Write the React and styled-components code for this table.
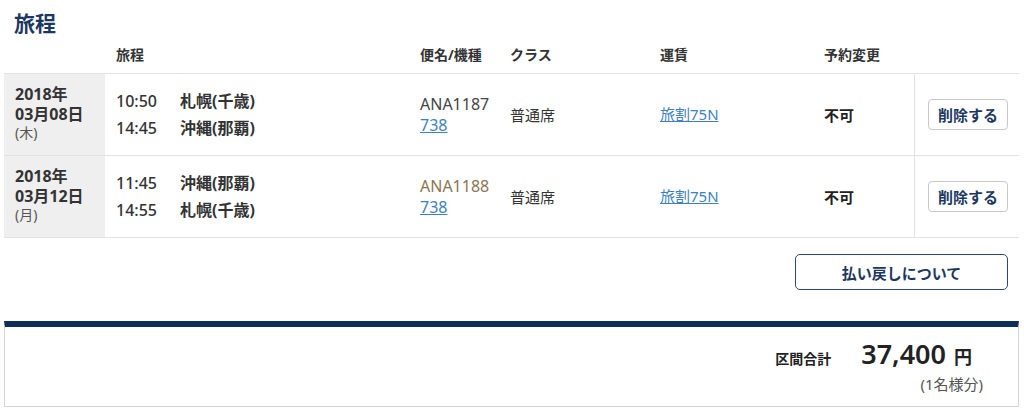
import styled, { createGlobalStyle } from 'styled-components';
import React from 'react';

const Global = createGlobalStyle`
    body {
        margin: 0;
        background: #ffffff;
        font-family: "Noto Sans", "Noto Sans CJK JP", sans-serif;
        color: #333333;
    }
`

const Page = styled.div`
    width: 1024px;
    padding: 0 5px 0 4px;
    box-sizing: border-box;
`

const Title = styled.h2`
    font-size: 21px;
    font-weight: 700;
    color: #1c3761;
    margin: 0;
    padding: 9px 0 0 10px;
    line-height: 28px;
`

const Grid = styled.div`
    display: grid;
    grid-template-columns: 101px 315px 90px 150px 164px 90px 1fr;
`

const Head = styled.div`
    font-size: 14px;
    font-weight: 700;
    color: #333;
    height: 28px;
    line-height: 20px;
    padding-top: 8px;
    padding-left: ${p => p.$pad || 0}px;
    border-bottom: 1px solid #e2e2e2;
`

const Cell = styled.div`
    border-bottom: 1px solid #e2e2e2;
    display: flex;
    flex-direction: column;
    justify-content: center;
    font-size: 15px;
    padding-left: ${p => p.$pad || 0}px;
    box-sizing: border-box;
    height: 82px;
`

const DateCell = styled(Cell)`
    background: #efefef;
    padding-left: 11px;
    padding-bottom: 4px;
    font-weight: 700;
    font-size: 16px;
    line-height: 20px;
    color: #333;
`

const Weekday = styled.span`
    font-weight: 400;
    font-size: 14px;
    color: #555;
    line-height: 18px;
`

const Leg = styled.div`
    display: flex;
    font-size: 16px;
    line-height: 27px;
    color: #333;
`

const Time = styled.span`
    width: 64px;
    font-weight: 500;
`

const City = styled.span`
    font-weight: 700;
`

const Flight = styled.span`
    color: ${p => p.$gold ? '#8a7650' : '#444'};
    font-size: 16px;
    line-height: 21px;
`

const LinkText = styled.a`
    color: #3d7fc1;
    text-decoration: underline;
    font-size: ${p => p.$size || 15}px;
    line-height: 21px;
    cursor: pointer;
`

const Strong = styled.span`
    font-weight: 700;
    color: #222;
`

const ActionCell = styled(Cell)`
    border-left: 1px solid #e2e2e2;
    align-items: center;
`

const SmallButton = styled.button`
    font-family: inherit;
    font-size: 15px;
    font-weight: 700;
    color: #1c3761;
    background: #fff;
    border: 1px solid #c9c9c9;
    border-radius: 4px;
    width: 80px;
    height: 31px;
    padding: 0;
    margin-left: 2px;
`

const Actions = styled.div`
    display: flex;
    justify-content: flex-end;
    padding: 16px 11px 0 0;
`

const RefundButton = styled.button`
    font-family: inherit;
    font-size: 15px;
    font-weight: 700;
    color: #1c3761;
    background: #fff;
    border: 1.5px solid #2d4a6c;
    border-radius: 5px;
    width: 213px;
    height: 36px;
    padding: 0;
`

const Summary = styled.div`
    margin-top: 31px;
    border-top: 6px solid #0f2e57;
    border-left: 1px solid #d4d4d4;
    border-right: 1px solid #d4d4d4;
    border-bottom: 1px solid #d4d4d4;
    display: flex;
    justify-content: flex-end;
    padding: 11px 35px 0 0;
    box-sizing: border-box;
    height: 86px;
`

const TotalBlock = styled.div`
    display: flex;
    flex-direction: column;
    align-items: flex-end;
`

const TotalLine = styled.div`
    display: flex;
    align-items: baseline;
    margin-right: 11px;
    line-height: 32px;
`

const TotalLabel = styled.span`
    font-size: 14px;
    font-weight: 700;
    color: #222;
    margin-right: 30px;
`

const Amount = styled.span`
    font-size: 27px;
    font-weight: 600;
    color: #222;
`

const Yen = styled.span`
    font-size: 18px;
    font-weight: 700;
    color: #222;
    margin-left: 8px;
`

const Per = styled.span`
    font-size: 15px;
    color: #555;
    line-height: 18px;
`

const legs = [
    {
        year: '2018年', day: '03月08日', week: '(木)',
        trip: [['10:50', '札幌(千歳)'], ['14:45', '沖縄(那覇)']],
        flight: 'ANA1187', gold: false
    },
    {
        year: '2018年', day: '03月12日', week: '(月)',
        trip: [['11:45', '沖縄(那覇)'], ['14:55', '札幌(千歳)']],
        flight: 'ANA1188', gold: true
    }
]

const App = () => {
    return <Page>
        <Global />
        <Title>旅程</Title>
        <Grid>
            <Head />
            <Head $pad={11}>旅程</Head>
            <Head>便名/機種</Head>
            <Head>クラス</Head>
            <Head>運賃</Head>
            <Head>予約変更</Head>
            <Head />
            {legs.map(l => (
                <React.Fragment key={l.flight}>
                    <DateCell>
                        <span>{l.year}</span>
                        <span>{l.day}</span>
                        <Weekday>{l.week}</Weekday>
                    </DateCell>
                    <Cell $pad={11}>
                        {l.trip.map(t => (
                            <Leg key={t[0]}><Time>{t[0]}</Time><City>{t[1]}</City></Leg>
                        ))}
                    </Cell>
                    <Cell>
                        <Flight $gold={l.gold}>{l.flight}</Flight>
                        <LinkText $size={16}>738</LinkText>
                    </Cell>
                    <Cell>普通席</Cell>
                    <Cell><LinkText>旅割75N</LinkText></Cell>
                    <Cell><Strong>不可</Strong></Cell>
                    <ActionCell><SmallButton>削除する</SmallButton></ActionCell>
                </React.Fragment>
            ))}
        </Grid>
        <Actions>
            <RefundButton>払い戻しについて</RefundButton>
        </Actions>
        <Summary>
            <TotalBlock>
                <TotalLine>
                    <TotalLabel>区間合計</TotalLabel>
                    <Amount>37,400</Amount>
                    <Yen>円</Yen>
                </TotalLine>
                <Per>(1名様分)</Per>
            </TotalBlock>
        </Summary>
    </Page>
}

export default App;
